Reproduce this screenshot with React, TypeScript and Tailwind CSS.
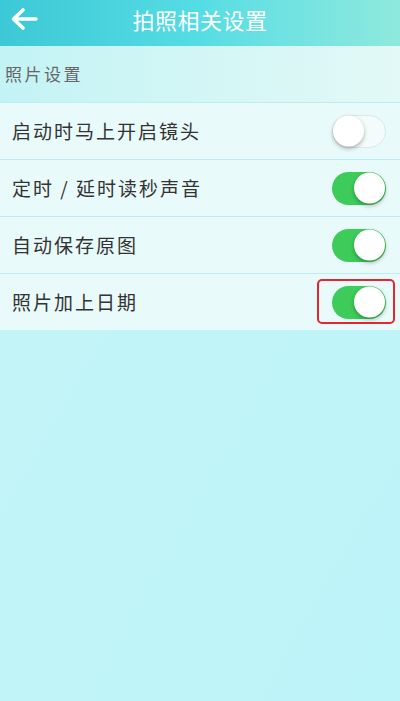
import React, { useState } from "react";

type Row = { label: string; on: boolean; highlight?: boolean };

const initialRows: Row[] = [
  { label: "启动时马上开启镜头", on: false },
  { label: "定时 / 延时读秒声音", on: true },
  { label: "自动保存原图", on: true },
  { label: "照片加上日期", on: true, highlight: true },
];

function Toggle({ on, onClick }: { on: boolean; onClick: () => void }) {
  return (
    <button
      onClick={onClick}
      className={`relative h-[33px] w-[54px] rounded-full transition-colors ${
        on ? "bg-[#3dcc5a]" : "bg-[#f4fbfb] border border-[#dde6e8]"
      }`}
    >
      <span
        className={`absolute top-1/2 -translate-y-1/2 h-[31px] w-[31px] rounded-full bg-white shadow-[0_2px_4px_rgba(0,0,0,0.3)] transition-all ${
          on ? "left-[22px]" : "left-0"
        }`}
      />
    </button>
  );
}

export default function App() {
  const [rows, setRows] = useState(initialRows);

  return (
    <div
      className="min-h-[701px] w-[400px] bg-gradient-to-br from-[#c6f5f8] via-[#c0f4f8] to-[#bdf4f9] text-[#333]"
      style={{ fontFamily: '"Noto Sans CJK SC", "Noto Sans", sans-serif' }}
    >
      {/* header */}
      <div className="flex h-[46px] items-center bg-gradient-to-r from-[#3cc8d6] via-[#55dde4] to-[#8ee9dd] pb-[8px] pl-[10px] pr-[10px]">
        <svg width="28" height="24" viewBox="0 0 28 24" className="shrink-0">
          <path
            d="M26 12H4M13 3L3.5 12L13 21"
            fill="none"
            stroke="white"
            strokeWidth="3.6"
            strokeLinecap="round"
            strokeLinejoin="round"
          />
        </svg>
        <h1 className="flex-1 pr-[28px] text-center text-[22px] leading-none tracking-[0.5px] text-white">
          拍照相关设置
        </h1>
      </div>

      {/* section label */}
      <div className="flex h-[56px] items-center bg-gradient-to-r from-[#c3f3f5] to-[#e2f9f6] px-[5px] text-[17px] tracking-[2.5px] text-[#666]">
        照片设置
      </div>

      <div className="bg-[#e9fafa]">
        {rows.map((r, i) => (
          <div
            key={r.label}
            className="flex h-[57px] items-center justify-between border-t border-[#bcedf2] pl-[12px] pr-[14px]"
          >
            <span className="text-[19px] tracking-[2px] text-[#333]">{r.label}</span>
            <div className="relative flex">
              <Toggle
                on={r.on}
                onClick={() =>
                  setRows(rows.map((x, j) => (j === i ? { ...x, on: !x.on } : x)))
                }
              />
              {/* red highlight box drawn over the switch */}
              {r.highlight && (
                <span className="pointer-events-none absolute -top-[7px] -bottom-[5px] -left-[15px] -right-[9px] rounded-[5px] border-2 border-[#e52630]" />
              )}
            </div>
          </div>
        ))}
      </div>
    </div>
  );
}
